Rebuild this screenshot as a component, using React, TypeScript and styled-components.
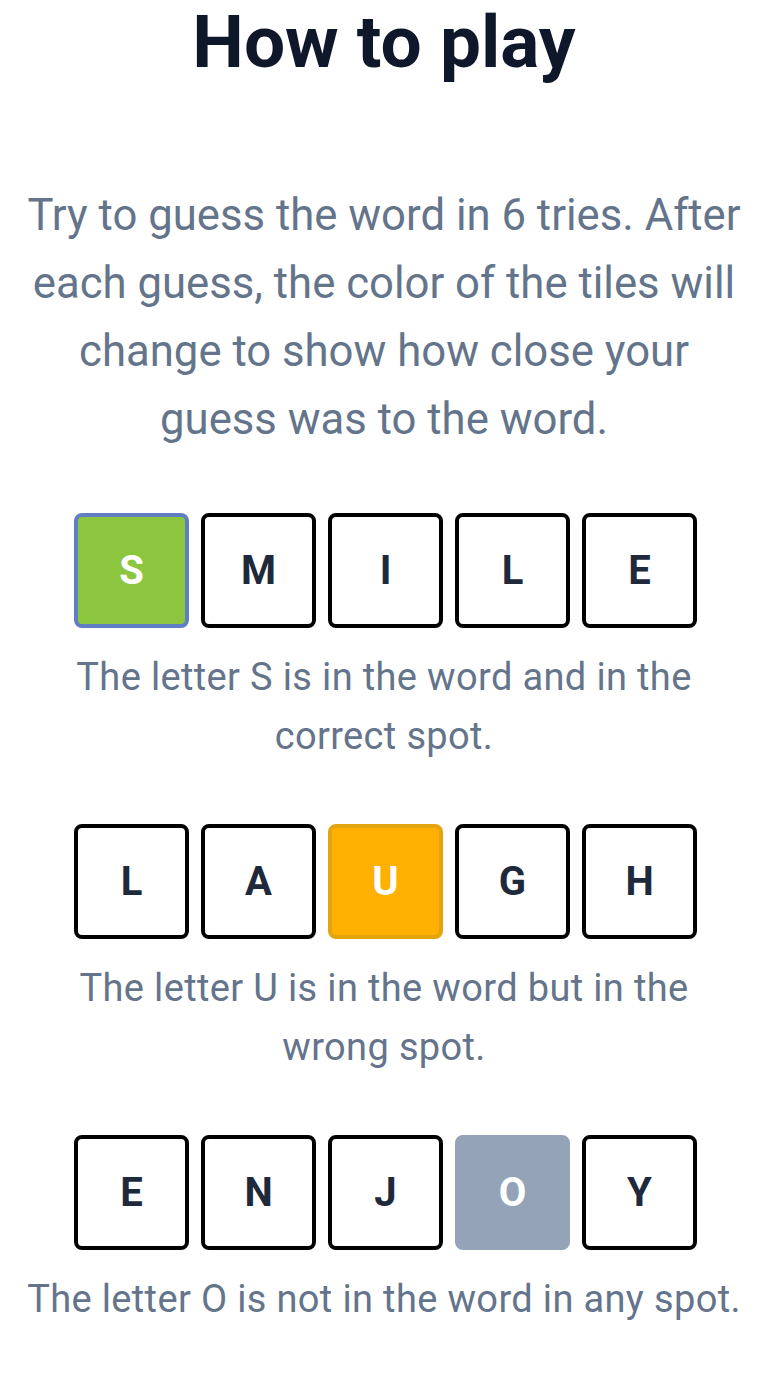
import React from "react";
import styled, { createGlobalStyle } from "styled-components";

const Global = createGlobalStyle`
  html, body { margin: 0; padding: 0; background: #ffffff; }
  body { font-family: Roboto, "Noto Sans", "Liberation Sans", sans-serif; }
`;

const Page = styled.main`
  width: 768px;
  display: flex;
  flex-direction: column;
  align-items: center;
  padding: 0 0 40px;
  box-sizing: border-box;
`;

const Title = styled.h1`
  margin: 0;
  font-family: Roboto, "Liberation Sans", sans-serif;
  font-weight: 700;
  font-size: 73px;
  line-height: 84px;
  color: #0f172a;
`;

const Intro = styled.p`
  margin: 97px 0 0;
  width: 764px;
  text-align: center;
  font-size: 43.7px;
  line-height: 68px;
  color: #64748b;
`;

const Example = styled.section<{ $first?: boolean }>`
  display: flex;
  flex-direction: column;
  align-items: center;
  margin-top: ${(p) => (p.$first ? "60px" : "58px")};
`;

const TileRow = styled.div`
  display: flex;
  gap: 12px;
  margin-left: 3px;
`;

type Kind = "empty" | "correct" | "present" | "absent";

const Tile = styled.div<{ $kind: Kind }>`
  width: 115px;
  height: 115px;
  box-sizing: border-box;
  border-radius: 8px;
  display: flex;
  align-items: center;
  justify-content: center;
  font-weight: 700;
  font-size: 40px;
  border: 4px solid
    ${(p) =>
      p.$kind === "correct"
        ? "#5f7ec4"
        : p.$kind === "present"
        ? "#e3a40f"
        : p.$kind === "absent"
        ? "#94a3b8"
        : "#000000"};
  background: ${(p) =>
    p.$kind === "correct"
      ? "#8cc63f"
      : p.$kind === "present"
      ? "#ffb000"
      : p.$kind === "absent"
      ? "#94a3b8"
      : "#ffffff"};
  color: ${(p) => (p.$kind === "empty" ? "#1e293b" : "#ffffff")};
`;

const Caption = styled.p`
  margin: 20px 0 0;
  width: 764px;
  text-align: center;
  font-size: 38px;
  letter-spacing: 0.35px;
  line-height: 59px;
  color: #64748b;
`;

const rows: { word: string; idx: number; kind: Kind; text: React.ReactNode }[] = [
  {
    word: "SMILE",
    idx: 0,
    kind: "correct",
    text: (
      <>
        The letter S is in the word and in the
        <br />
        correct spot.
      </>
    ),
  },
  {
    word: "LAUGH",
    idx: 2,
    kind: "present",
    text: (
      <>
        The letter U is in the word but in the
        <br />
        wrong spot.
      </>
    ),
  },
  {
    word: "ENJOY",
    idx: 3,
    kind: "absent",
    text: <>The letter O is not in the word in any spot.</>,
  },
];

export default function App() {
  return (
    <>
      <Global />
      <Page>
        <Title>How to play</Title>
        <Intro>
          Try to guess the word in 6 tries. After
          <br />
          each guess, the color of the tiles will
          <br />
          change to show how close your
          <br />
          guess was to the word.
        </Intro>
        {rows.map((r, i) => (
          <Example key={r.word} $first={i === 0}>
            <TileRow>
              {r.word.split("").map((c, j) => (
                <Tile key={j} $kind={j === r.idx ? r.kind : "empty"}>
                  {c}
                </Tile>
              ))}
            </TileRow>
            <Caption>{r.text}</Caption>
          </Example>
        ))}
      </Page>
    </>
  );
}
